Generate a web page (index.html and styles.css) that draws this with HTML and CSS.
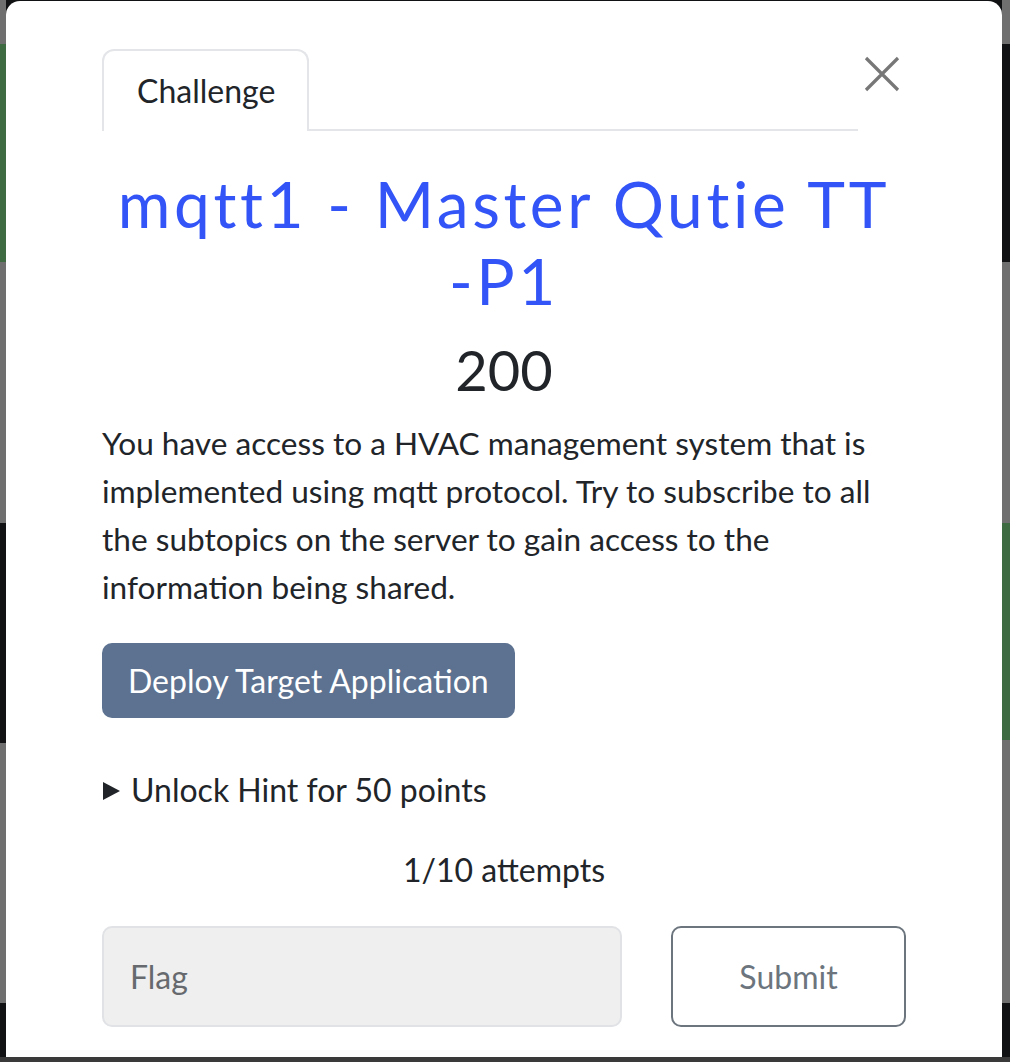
FILE: index.html
```html
<!DOCTYPE html>
<html lang="en">
<head>
<meta charset="utf-8">
<title>Challenge</title>
<link rel="stylesheet" href="styles.css">
</head>
<body>
<div class="modal">
  <div class="modal-body">
    <div class="top-row">
      <ul class="nav-tabs">
        <li class="tab active">Challenge</li>
      </ul>
      <button class="close" aria-label="Close">
        <svg width="36" height="36" viewBox="0 0 36 36"><path d="M2 2 L34 34 M34 2 L2 34" stroke="#777" stroke-width="3.2" fill="none"/></svg>
      </button>
    </div>
    <h3 class="challenge-name">mqtt1 - Master Qutie TT <span class="nowrap">-P1</span></h3>
    <h4 class="challenge-value">200</h4>
    <p class="challenge-desc">You have access to a HVAC management system that is implemented using mqtt protocol. Try to subscribe to all the subtopics on the server to gain access to the information being shared.</p>
    <button class="deploy">Deploy Target Application</button>
    <details class="hint">
      <summary>Unlock Hint for 50 points</summary>
    </details>
    <p class="attempts">1/10 attempts</p>
    <div class="submit-row">
      <input class="flag" type="text" placeholder="Flag">
      <button class="submit">Submit</button>
    </div>
  </div>
</div>
<div class="bottom-strip"></div>
</body>
</html>
```
FILE: styles.css
```css
html, body {
  margin: 0;
  padding: 0;
}
body {
  width: 1010px;
  height: 1062px;
  overflow: hidden;
  font-family: Lato, "Noto Sans", sans-serif;
  color: #212529;
  background-color: #111214;
  background-image:
    linear-gradient(to bottom,
      #6f6f6f 0, #6f6f6f 44px,
      #3e6b42 44px, #3e6b42 262px,
      #6f6f6f 262px, #6f6f6f 523px,
      #111214 523px, #111214 743px,
      #6f6f6f 743px, #6f6f6f 1003px,
      #111214 1003px, #111214 1062px),
    linear-gradient(to bottom,
      #6f6f6f 0, #6f6f6f 44px,
      #111214 44px, #111214 262px,
      #6f6f6f 262px, #6f6f6f 523px,
      #3e6b42 523px, #3e6b42 740px,
      #6f6f6f 740px, #6f6f6f 1003px,
      #111214 1003px, #111214 1062px);
  background-size: 6px 100%, 8px 100%;
  background-position: left top, right top;
  background-repeat: no-repeat;
  display: flex;
  flex-direction: column;
}
.modal {
  margin: 1px 8px 0 6px;
  height: 1056px;
  background: #fff;
  border-radius: 14px 14px 0 0;
  box-sizing: border-box;
  flex: none;
}
.modal-body {
  padding: 48px 96px 0 96px;
}
.top-row {
  display: flex;
  align-items: flex-start;
}
.nav-tabs {
  list-style: none;
  margin: 0;
  padding: 0;
  width: 756px;
  display: flex;
  border-bottom: 2px solid #e3e5e8;
}
.tab {
  font-size: 32px;
  line-height: 48px;
  padding: 16px 32px 16px 33px;
  border: 2px solid #e3e5e8;
  border-bottom: none;
  border-radius: 12px 12px 0 0;
  margin-bottom: -2px;
  background: #fff;
  height: 82px;
  box-sizing: border-box;
}
.close {
  margin: 6px 0 0 5px;
  padding: 0;
  border: none;
  background: none;
  width: 38px;
  height: 38px;
  display: flex;
  align-items: center;
  justify-content: center;
}
.challenge-name {
  margin: 34px 0 0 0;
  text-align: center;
  font-weight: 400;
  font-size: 64px;
  line-height: 77px;
  letter-spacing: 3.6px;
  color: #3355f7;
}
.nowrap {
  white-space: nowrap;
}
.challenge-value {
  margin: 20px 0 0 0;
  text-align: center;
  font-weight: 400;
  font-size: 56px;
  line-height: 62px;
}
.challenge-desc {
  margin: 18px 0 0 0;
  font-size: 31.6px;
  line-height: 48px;
}
.deploy {
  margin-top: 32px;
  display: block;
  font-family: Lato, "Noto Sans", sans-serif;
  font-size: 32px;
  line-height: 48px;
  color: #fff;
  background: #5c7290;
  border: none;
  border-radius: 10px;
  height: 75px;
  padding: 0 26px;
}
.hint {
  margin-top: 48px;
  font-size: 32px;
  line-height: 48px;
}
.hint summary {
  cursor: pointer;
  list-style: none;
  display: flex;
  align-items: center;
}
.hint summary::-webkit-details-marker {
  display: none;
}
.hint summary::before {
  content: "";
  width: 0;
  height: 0;
  border-style: solid;
  border-width: 9px 0 9px 17px;
  border-color: transparent transparent transparent #212529;
  margin: 2px 11px 0 1px;
}
.attempts {
  margin: 32px 0 0 0;
  text-align: center;
  font-size: 32px;
  line-height: 48px;
}
.submit-row {
  margin-top: 32px;
  display: flex;
  justify-content: space-between;
}
.flag {
  width: 520px;
  height: 101px;
  box-sizing: border-box;
  background: #efefef;
  border: 2px solid #e0e2e5;
  border-radius: 10px;
  padding: 0 26px;
  font-family: Lato, "Noto Sans", sans-serif;
  font-size: 32px;
  color: #212529;
}
.flag::placeholder {
  color: #666a6e;
}
.submit {
  width: 235px;
  height: 101px;
  box-sizing: border-box;
  background: #fff;
  border: 2px solid #6c757d;
  border-radius: 10px;
  font-family: Lato, "Noto Sans", sans-serif;
  font-size: 32px;
  color: #6c757d;
}
.bottom-strip {
  flex: none;
  height: 5px;
  background: #3a3a3a;
}
```
